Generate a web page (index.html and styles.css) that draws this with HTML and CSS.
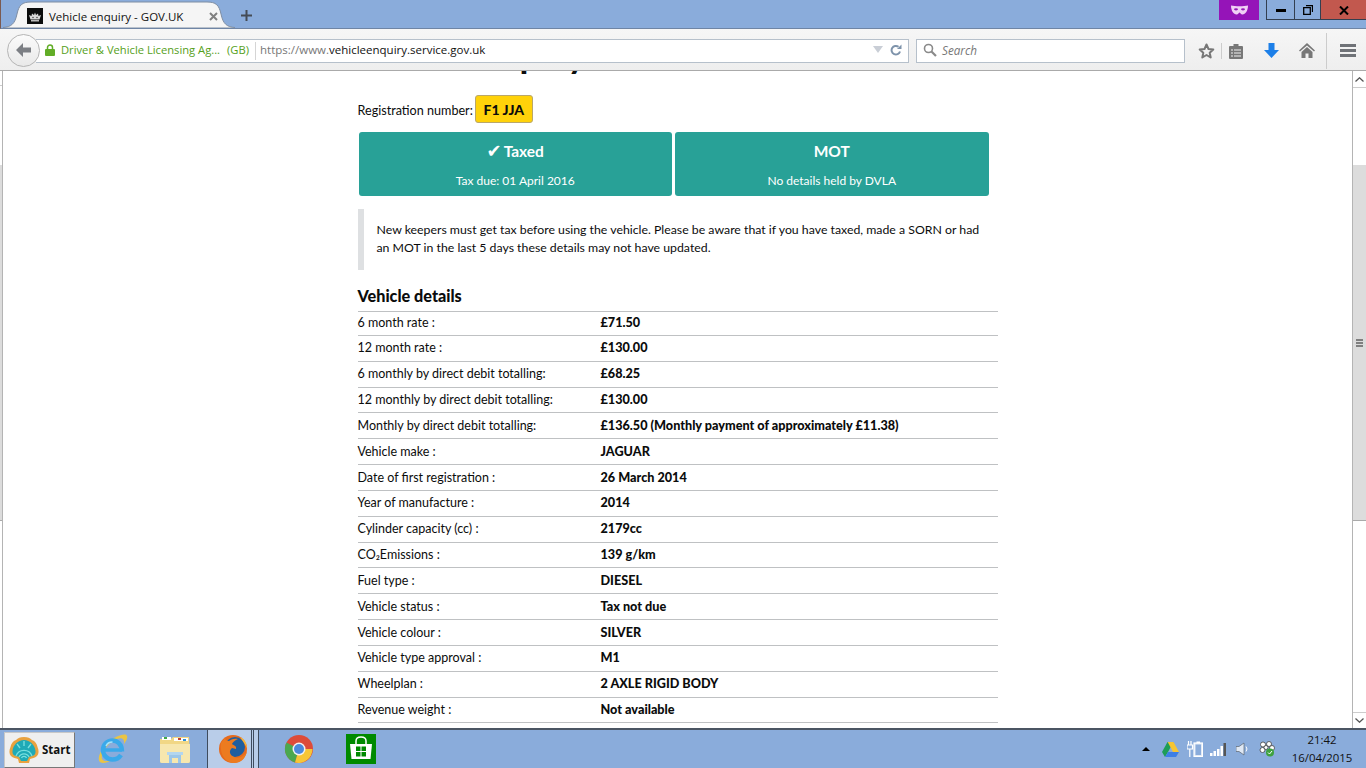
FILE: index.html
```html
<!DOCTYPE html>
<html lang="en">
<head>
<meta charset="utf-8">
<title>Vehicle enquiry - GOV.UK</title>
<link rel="stylesheet" href="styles.css">
</head>
<body>
<div class="screen">
  <header class="titlebar">
    <div class="tab">
      <svg class="tab-shape" width="232" height="28" viewBox="0 0 232 28"><path d="M0 27.500C8 27 12 24 14 14C16 5 19 2 28 2H204C213 2 216 5 218 14C220 24 224 27 232 27.500V28H0Z" fill="#f5f5f5" stroke="#7f8ea3" stroke-width="1"/></svg>
      <span class="favicon"><svg width="16" height="16" viewBox="0 0 16 16"><rect width="16" height="16" fill="#0b0c0c"/><path d="M3.500 11.500 2 7l2.500 1L5 5.500l2 1.500L8 4.500 9 7l2-1.500.5 2.500L14 7l-1.500 4.500Z" fill="#d8d8d8"/><rect x="4" y="12" width="8" height="1.500" fill="#bbb"/><circle cx="6" cy="9.500" r=".7" fill="#333"/><circle cx="10" cy="9.500" r=".7" fill="#333"/></svg></span>
      <span class="tab-title">Vehicle enquiry - GOV.UK</span>
      <svg class="tab-close" width="9" height="9" viewBox="0 0 9 9"><path d="M1 1l7 7M8 1 1 8" stroke="#808080" stroke-width="2"/></svg>
    </div>
    <svg class="newtab" width="11" height="11" viewBox="0 0 11 11"><path d="M5.500 0v11M0 5.500h11" stroke="#444b55" stroke-width="2"/></svg>
    <div class="spacer"></div>
    <div class="mask"><svg width="17" height="10" viewBox="0 0 17 10"><path d="M0 0.500C4 1.500 13 1.500 17 0.500C17 6 14 10 11 9.500C9.500 9 9 7.500 8.500 7.500C8 7.500 7.500 9 6 9.500C3 10 0 6 0 0.500Z" fill="#f0d0f5"/><ellipse cx="5" cy="4.300" rx="2" ry="1.100" fill="#9514b8"/><ellipse cx="12" cy="4.300" rx="2" ry="1.100" fill="#9514b8"/></svg></div>
    <div class="winctl">
      <span class="wbtn"><svg width="10" height="3" viewBox="0 0 10 3"><rect width="10" height="3" fill="#000"/></svg></span>
      <span class="wbtn wbtn-max"><svg width="10" height="10" viewBox="0 0 10 10"><path d="M3 0.500H9.500V7M0.700 2.700H7.300V9.300H0.700Z" fill="none" stroke="#000" stroke-width="1.300"/></svg></span>
      <span class="wbtn wbtn-close"><svg width="10" height="9" viewBox="0 0 10 9"><path d="M1 0.500l8 8M9 0.500l-8 8" stroke="#000" stroke-width="2"/></svg></span>
    </div>
  </header>

  <nav class="navbar">
    <span class="back"><svg width="16" height="14" viewBox="0 0 16 14"><path d="M7 0 0 7l7 7V9.500H15V4.500H7Z" fill="#7c7f84"/></svg></span>
    <div class="urlbar">
      <svg class="lock" width="10" height="12" viewBox="0 0 10 12"><rect y="5" width="10" height="7" rx="1" fill="#62ad27"/><path d="M2.500 5.500V3.500a2.500 2.500 0 0 1 5 0v2" fill="none" stroke="#62ad27" stroke-width="1.500"/></svg>
      <span class="identity">Driver &amp; Vehicle Licensing Ag...</span>
      <span class="identity identity-gb">(GB)</span>
      <span class="urlsep"></span>
      <span class="url"><span class="url-dim">https://www.</span>vehicleenquiry.service.gov.uk</span>
      <span class="spacer"></span>
      <svg class="drop" width="10" height="7" viewBox="0 0 10 7"><path d="M0 0h10L5 7Z" fill="#c9ced6"/></svg>
      <svg class="reload" width="12" height="12" viewBox="0 0 12 12"><path d="M10 7.500A4.300 4.300 0 1 1 8.500 2.800" fill="none" stroke="#7e93ab" stroke-width="2"/><path d="M7 5h4.500V0.500Z" fill="#7e93ab"/></svg>
    </div>
    <div class="searchbar">
      <svg width="14" height="14" viewBox="0 0 14 14"><circle cx="5.500" cy="5.500" r="4" fill="none" stroke="#8a8a8a" stroke-width="1.600"/><path d="M8.500 8.500l4.500 4.500" stroke="#8a8a8a" stroke-width="2.200"/></svg>
      <span class="search-text">Search</span>
    </div>
    <div class="tools">
      <svg class="ti-star" width="17" height="16" viewBox="0 0 17 16"><path d="M8.500 1.500 10.500 6l4.800.5-3.600 3.200 1 4.800-4.200-2.500-4.200 2.500 1-4.800L1.700 6.500 6.500 6Z" fill="none" stroke="#777" stroke-width="2" stroke-linejoin="round"/></svg>
      <span class="tsep"></span>
      <svg class="ti-clip" width="14" height="16" viewBox="0 0 14 16"><path d="M1 3H4.500V1H9.500V3H13Q14 3 14 4V15Q14 16 13 16H1Q0 16 0 15V4Q0 3 1 3Z" fill="#777"/><path d="M2 6.500h2v1H2Zm3 0h7v1H5ZM2 9.500h2v1H2Zm3 0h7v1H5ZM2 12.500h2v1H2Zm3 0h7v1H5Z" fill="#f2f2f2"/></svg>
      <svg class="ti-down" width="15" height="15" viewBox="0 0 15 15"><path d="M4.500 0h6v7H15L7.500 15 0 7H4.500Z" fill="#1c7fe8"/></svg>
      <svg class="ti-home" width="16" height="15" viewBox="0 0 16 15"><path d="M8 0 0 7.500 1 8.500 8 2.500 15 8.500 16 7.500Z M2.500 9 8 4 13.500 9V15H9.500V10.500H6.500V15H2.500Z" fill="#777"/></svg>
      <span class="tsep tsep-tall"></span>
      <svg class="ti-menu" width="16" height="13" viewBox="0 0 16 13"><path d="M0 0h16v3H0ZM0 5h16v3H0ZM0 10h16v3H0Z" fill="#6f7277"/></svg>
    </div>
  </nav>

  <div class="viewport">
    <aside class="sb-left">
      <span class="sb-left-top"></span>
      <span class="sb-left-thumb"></span>
    </aside>
    <main class="page">
      <div class="content">
        <h1 class="title">Vehicle enquiry</h1>
        <p class="reg"><span class="reg-label">Registration number:</span><span class="plate">F1 JJA</span></p>
        <div class="cards">
          <section class="card">
            <h2 class="card-head"><span class="tick">✔</span>Taxed</h2>
            <p class="card-sub">Tax due: 01 April 2016</p>
          </section>
          <section class="card">
            <h2 class="card-head">MOT</h2>
            <p class="card-sub">No details held by DVLA</p>
          </section>
        </div>
        <div class="inset">New keepers must get tax before using the vehicle. Please be aware that if you have taxed, made a SORN or had an MOT in the last 5 days these details may not have updated.</div>
        <h2 class="details-head">Vehicle details</h2>
        <dl class="details">
          <div class="row row-first"><dt>6 month rate :</dt><dd>£71.50</dd></div>
          <div class="row"><dt>12 month rate :</dt><dd>£130.00</dd></div>
          <div class="row"><dt>6 monthly by direct debit totalling:</dt><dd>£68.25</dd></div>
          <div class="row"><dt>12 monthly by direct debit totalling:</dt><dd>£130.00</dd></div>
          <div class="row"><dt>Monthly by direct debit totalling:</dt><dd>£136.50 (Monthly payment of approximately £11.38)</dd></div>
          <div class="row"><dt>Vehicle make :</dt><dd>JAGUAR</dd></div>
          <div class="row"><dt>Date of first registration :</dt><dd>26 March 2014</dd></div>
          <div class="row"><dt>Year of manufacture :</dt><dd>2014</dd></div>
          <div class="row"><dt>Cylinder capacity (cc) :</dt><dd>2179cc</dd></div>
          <div class="row"><dt>CO₂Emissions :</dt><dd>139 g/km</dd></div>
          <div class="row"><dt>Fuel type :</dt><dd>DIESEL</dd></div>
          <div class="row"><dt>Vehicle status :</dt><dd>Tax not due</dd></div>
          <div class="row"><dt>Vehicle colour :</dt><dd>SILVER</dd></div>
          <div class="row"><dt>Vehicle type approval :</dt><dd>M1</dd></div>
          <div class="row"><dt>Wheelplan :</dt><dd>2 AXLE RIGID BODY</dd></div>
          <div class="row"><dt>Revenue weight :</dt><dd>Not available</dd></div>
        </dl>
      </div>
    </main>
    <aside class="sb-right">
      <span class="sb-btn"><svg width="9" height="5" viewBox="0 0 9 5"><path d="M0.500 4.500 4.500 0.800 8.500 4.500" fill="none" stroke="#555" stroke-width="1.300"/></svg></span>
      <span class="sb-track sb-track-top"></span>
      <span class="sb-thumb"><span class="grip"></span><span class="grip"></span><span class="grip"></span></span>
      <span class="sb-track"></span>
      <span class="sb-btn sb-btn-down"><svg width="9" height="5" viewBox="0 0 9 5"><path d="M0.500 0.500 4.500 4.200 8.500 0.500" fill="none" stroke="#555" stroke-width="1.300"/></svg></span>
    </aside>
  </div>

  <footer class="taskbar">
    <div class="start">
      <svg width="30" height="28" viewBox="0 0 30 28"><path d="M15 1C11 1 9 2 7 4C4 5 2 8 1.500 11C0 14 0 18 2 20C4 22 7 22 9 23L10 27H20L21 23C23 22 26 22 28 20C30 18 30 14 28.500 11C28 8 26 5 23 4C21 2 19 1 15 1Z" fill="#e9a23f"/><path d="M15 4C9 4 4 9 3.500 15C3 19 6 20 10 21L12 25H18L20 21C24 20 27 19 26.500 15C26 9 21 4 15 4Z" fill="#1faab6"/><path d="M7 20A8.500 8.500 0 0 1 23 20M10 21A5.500 5.500 0 0 1 20 21M12.500 22A2.700 2.700 0 0 1 17.500 22M15 5V10M8 8 11 12M22 8 19 12" fill="none" stroke="#78e0e0" stroke-width="1.300"/></svg>
      <span class="start-label">Start</span>
    </div>
    <span class="tb-item tb-ie"><svg width="32" height="32" viewBox="0 0 32 32"><path d="M4 29C0 25 7 11 18 5C24 2 30 0 31 3C32 5 30 8 28 11C28.500 7 27 4 21 6C10 11 3 23 7 27C9 29 13 28 16 27C11 30 6 31 4 29Z" fill="#e9c445"/><path d="M7.500 17H26" stroke="#3aa9ea" stroke-width="3.500"/><path d="M26 18.500C26 11 21 7.500 16.500 7.500C11 7.500 7 12 7 17C7 22 11 26.500 16.500 26.500C20 26.500 23 25 25 22" fill="none" stroke="#3aa9ea" stroke-width="4.500"/><path d="M10 13C11 10.500 13.500 9 16.500 9" fill="none" stroke="#a8e2fa" stroke-width="1.500"/></svg></span>
    <span class="tb-item tb-folder"><svg width="32" height="32" viewBox="0 0 32 32"><path d="M1 6H12L14 4H30L31 28Q31 30 29 30H3Q1 30 1 28Z" fill="#f1d785"/><path d="M3 4H12V7H3Z" fill="#fff"/><rect x="5" y="4" width="3" height="2" fill="#41a848"/><path d="M15 5H29V8H15Z" fill="#fff"/><rect x="19" y="5" width="3" height="2" fill="#c4442f"/><rect x="24" y="6" width="3" height="2" fill="#2b8fd8"/><path d="M1 11H31V28Q31 30 29 30H3Q1 30 1 28Z" fill="#f7e7ae"/><path d="M10 30V22H22V30H19V25H13V30Z" fill="#9cc6e8"/><path d="M8 19H24V22H8Z" fill="#b3d6ef"/></svg></span>
    <span class="tb-item tb-ff">
      <svg width="30" height="30" viewBox="0 0 30 30"><circle cx="15" cy="15" r="14" fill="#e66a1c"/><circle cx="17" cy="13" r="10" fill="#1f5e9f"/><path d="M3 9C2 16 4 27 15 29C24 29.500 28 23 29 17C27 22 21 25 16 23C11 21 11 16 14 14L18 15C19 12 15 11 14 10C15 8 17 6 20 5C15 4 13 6 11 7C9 7 7 6 7 4C5 6 4 8 3 9Z" fill="#ec7b20"/><path d="M22 3C27 5 29 10 29 14L26 9Z" fill="#f6b73c"/></svg>
      <span class="ff-div"></span>
    </span>
    <span class="tb-item tb-chrome"><svg width="30" height="30" viewBox="0 0 30 30"><circle cx="15" cy="15" r="14" fill="#dd4b39"/><path d="M15 15 2.500 8.500A14 14 0 0 0 11 28.500Z" fill="#4aa84f"/><path d="M15 15H28.500A14 14 0 0 1 11 28.500Z" fill="#f6c637"/><circle cx="15" cy="15" r="6.500" fill="#f1f1f1"/><circle cx="15" cy="15" r="5" fill="#4a89dc"/></svg></span>
    <span class="tb-item tb-store"><svg width="30" height="30" viewBox="0 0 30 30"><rect width="30" height="30" fill="#008a00"/><path d="M4 10H26L24.500 25H5.500Z" fill="#fff"/><path d="M10 10V7Q10 3 15 3T20 7V10" fill="none" stroke="#fff" stroke-width="1.500"/><path d="M10 12.500h4.500v4.500H10ZM15.500 12.500H20v4.500h-4.500ZM10 18h4.500v4.500H10ZM15.500 18H20v4.500h-4.500Z" fill="#008a00"/></svg></span>
    <div class="spacer"></div>
    <div class="tray">
      <svg class="tr-arrow" width="8" height="4" viewBox="0 0 8 4"><path d="M0 4 4 0l4 4Z" fill="#000"/></svg>
      <svg class="tr-drive" width="17" height="15" viewBox="0 0 17 15"><path d="M5.500 0h6l-5.500 10L3 15 0 10Z" fill="#1d9d57"/><path d="M5.700 0h5.800L17 10h-6Z" fill="#f6c533"/><path d="M3 15h11l3-5H6Z" fill="#3d7fe6"/></svg>
      <svg class="tr-power" width="16" height="16" viewBox="0 0 16 16"><path d="M1.500 0v4M4 0v4M0 4h5.500v4H0ZM2.800 8V16" fill="none" stroke="#fff" stroke-width="1.200"/><rect x="7" y="2" width="8.500" height="13.500" fill="#dfe8f4" stroke="#fff" stroke-width="1.200"/><rect x="9.500" y="0.500" width="3.500" height="1.500" fill="#fff"/><rect x="8.500" y="3.500" width="5.500" height="10.500" fill="#8aacdb"/></svg>
      <svg class="tr-signal" width="16" height="13" viewBox="0 0 16 13"><path d="M0 10h2.500v3H0ZM3.500 8H6v5H3.500ZM7 6h2.500v7H7ZM10.500 3H13v10h-2.500Z" fill="#fff"/><path d="M13.500 0H16V13H13.500Z" fill="#555"/></svg>
      <svg class="tr-sound" width="13" height="14" viewBox="0 0 13 14"><path d="M0 4.500h3L8 1V13L3 9.500H0Z" fill="#dfe8f4" stroke="#5a6470" stroke-width="0.700"/><path d="M10 4.500Q12 7 10 9.500" fill="none" stroke="#fff"/></svg>
      <svg class="tr-gear" width="16" height="16" viewBox="0 0 16 16"><g fill="#fff" stroke="#444" stroke-width="0.800"><circle cx="4" cy="3.500" r="2.500"/><circle cx="10" cy="3" r="2.500"/><circle cx="3.500" cy="9" r="2.500"/><circle cx="13" cy="7" r="2.500"/><circle cx="7" cy="6.500" r="2"/></g><circle cx="11" cy="11.500" r="4" fill="#3ea23e"/><path d="M9 11.500l1.500 1.500 2.500-3" fill="none" stroke="#fff"/></svg>
      <div class="clock"><span>21:42</span><span>16/04/2015</span></div>
    </div>
  </footer>
</div>
</body>
</html>
```
FILE: styles.css
```css
* { box-sizing: border-box; }
html, body { margin: 0; padding: 0; height: 100%; overflow: hidden; }
body { background: #fff; color: #0b0c0c; font-family: Lato, "Noto Sans", sans-serif; }
svg { display: block; flex: none; }
.screen { width: 1366px; height: 768px; display: flex; flex-direction: column; }
.spacer { flex: 1; }

/* title bar */
.titlebar { height: 29px; flex: none; background: #8aacdb; display: flex; align-items: flex-start; padding-left: 2px; border-left: 1px solid #7b5a50; border-bottom: 1px solid #6f85a5; font-family: "Open Sans", sans-serif; }
.tab { position: relative; width: 232px; height: 29px; display: flex; align-items: center; padding: 3px 0 0 24px; }
.tab-shape { position: absolute; left: 0; top: 0; }
.favicon, .tab-title, .tab-close { position: relative; }
.tab-title { margin-left: 6px; font-size: 11.500px; color: #111; width: 155px; white-space: nowrap; }
.tab-close { margin-left: 5px; }
.newtab { margin: 10px 0 0 6px; }
.mask { width: 40px; height: 20px; background: #9514b8; display: flex; align-items: center; justify-content: center; margin-right: 7px; }
.winctl { display: flex; height: 20px; }
.wbtn { width: 28px; height: 20px; border: 1px solid #333f50; border-top: 0; border-right: 0; display: flex; align-items: center; justify-content: center; padding-top: 2px; }
.wbtn-max { width: 26px; padding-top: 0; }
.wbtn-close { width: 46px; background: #c2584e; }

/* nav bar */
.navbar { height: 42px; flex: none; background: linear-gradient(#f6f6f6, #eeeeee); border-bottom: 1px solid #aaa; display: flex; align-items: center; padding: 2px 10px 0 7px; position: relative; font-family: "Open Sans", sans-serif; }
.back { width: 33px; height: 33px; border-radius: 50%; background: linear-gradient(#fbfbfb, #e9e9e9); border: 1px solid #b5b5b5; display: flex; align-items: center; justify-content: center; position: relative; z-index: 1; margin-top: -1px; }
.urlbar { width: 873px; height: 24px; margin-left: -4px; background: #fff; border: 1px solid #b6c0cb; border-left: 0; display: flex; align-items: center; padding: 0 6px 2px 9px; font-size: 11.200px; }
.lock { margin-right: 6px; }
.identity { color: #55a01b; white-space: nowrap; }
.identity-gb { margin-left: 7px; }
.urlsep { width: 1px; height: 18px; background: #d5d5d5; margin: 2px 4px 0 6px; }
.url { white-space: nowrap; color: #111; font-size: 11.500px; }
.url-dim { color: #777; }
.drop { margin-right: 7px; }
.searchbar { width: 269px; height: 24px; margin-left: 7px; background: #fff; border: 1px solid #b6c0cb; display: flex; align-items: center; padding: 0 0 2px 6px; gap: 6px; }
.search-text { font-size: 11.700px; font-style: italic; color: #777; margin-left: -1px; }
.tools { display: flex; align-items: center; margin-left: 13px; }
.tsep { width: 1px; height: 16px; background: #ccc; margin: 0 7px 0 6px; }
.ti-down { margin-left: 21px; }
.ti-home { margin-left: 20px; }
.tsep-tall { height: 36px; margin: 0 13px 0 11px; }

/* viewport */
.viewport { height: 657px; flex: none; display: flex; overflow: hidden; }
.sb-left { width: 3px; flex: none; border-right: 1px solid #b4b4b4; display: flex; flex-direction: column; }
.sb-left-top { height: 15px; flex: none; border-bottom: 1px solid #ccc; }
.sb-left-thumb { height: 356px; flex: none; margin-top: 79px; background: #dcdcdc; border-bottom: 1px solid #aaa; }
.page { flex: 1; overflow: hidden; background: #fff; }
.content { width: 640px; margin: 0 auto; }
.title { margin: -37px 0 17px; font-size: 33px; line-height: 44px; font-weight: 900; }
.reg { margin: 0 0 9px; display: flex; align-items: center; gap: 2px; font-size: 12.600px; height: 28px; }
.reg-label { padding-top: 2px; }
.plate { width: 58px; height: 28px; background: #ffd20a; border: 1px solid #b9a76a; border-radius: 3px; display: flex; align-items: center; justify-content: center; font-size: 14px; font-weight: 900; }
.cards { display: flex; gap: 3px; padding-left: 1px; width: 631px; }
.card { width: 313.500px; height: 64px; background: #28a197; border-radius: 3px; color: #fff; text-align: center; padding-top: 8px; }
.card-head { margin: 0; font-size: 15.500px; line-height: 22px; font-weight: 700; display: flex; justify-content: center; align-items: center; gap: 2px; }
.tick { font-size: 18px; line-height: 22px; font-family: "DejaVu Sans", sans-serif; font-weight: 400; }
.card-sub { margin: 10px 0 0; font-size: 12px; line-height: 18px; }
.inset { margin-top: 13px; width: 640px; height: 61px; border-left: 6px solid #dee0e2; padding: 12px 10px 0 13px; font-size: 12.300px; line-height: 18px; }
.details-head { margin: 17px 0 6px; font-size: 16.200px; line-height: 18px; font-weight: 900; }
.details { margin: 0; border-top: 1px solid #bfc1c3; }
.row { display: flex; height: 25.840px; border-bottom: 1px solid #bfc1c3; align-items: center; font-size: 12.500px; padding-bottom: 1px; }
.row-first { height: 24px; padding-bottom: 3px; }
.row dt { width: 243px; }
.row dd { margin: 0; font-weight: 900; font-size: 12.650px; }

/* right scrollbar */
.sb-right { width: 14px; flex: none; border-left: 1px solid #b4b4b4; display: flex; flex-direction: column; background: #fff; }
.sb-btn { height: 17px; border-bottom: 1px solid #ccc; display: flex; align-items: center; justify-content: center; flex: none; }
.sb-btn-down { height: 16px; border-top: 1px solid #ccc; border-bottom: 0; }
.sb-track { flex: 1; }
.sb-track-top { flex: none; height: 77px; }
.sb-thumb { height: 356px; flex: none; background: #dcdcdc; border-bottom: 1px solid #aaa; display: flex; flex-direction: column; align-items: center; justify-content: center; gap: 1px; }
.grip { width: 7px; height: 2px; background: #7f7f7f; }

/* taskbar */
.taskbar { height: 40px; flex: none; background: #8aacdb; border-top: 2px solid #4b5563; display: flex; align-items: center; position: relative; font-family: "Open Sans", sans-serif; }
.start { width: 71px; height: 36px; margin: 1px 0 0 4px; background: #efefef; border: 1px solid #c8c8c8; border-right-color: #777; border-bottom-color: #777; display: flex; align-items: center; padding-left: 4px; gap: 3px; }
.start-label { font-size: 11.500px; font-weight: 700; color: #111; }
.tb-item { display: flex; align-items: center; justify-content: center; height: 38px; }
.tb-ie { width: 32px; margin-left: 21px; }
.tb-folder { width: 32px; margin-left: 31px; }
.tb-ff { width: 52px; margin-left: 16px; background: #b9cde9; border: 1px solid #3f4c5e; border-width: 0 1px; position: relative; padding-right: 2px; justify-content: flex-start; padding-left: 10px; }
.ff-div { position: absolute; right: 4px; top: 0; bottom: 0; width: 3px; border-left: 1px solid #3f4c5e; border-right: 1px solid #3f4c5e; }
.tb-chrome { width: 30px; margin-left: 25px; }
.tb-store { width: 30px; margin-left: 32px; }
.tray { display: flex; align-items: center; font-size: 11.400px; color: #111; padding-right: 14px; }
.tr-drive { margin-left: 12px; }
.tr-power { margin-left: 8px; }
.tr-signal { margin-left: 7px; }
.tr-sound { margin-left: 10px; }
.tr-gear { margin-left: 10px; }
.clock { display: flex; flex-direction: column; align-items: center; width: 60px; margin-left: 17px; line-height: 18px; }
```
